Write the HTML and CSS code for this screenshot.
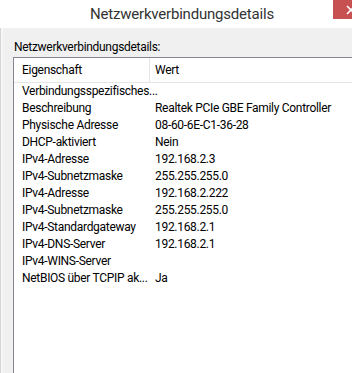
FILE: index.html
```html
<!DOCTYPE html>
<html lang="de">
<head>
  <meta charset="UTF-8" />
  <title>Netzwerkverbindungsdetails</title>
  <link rel="stylesheet" href="styles.css">
</head>
<body>

  <!-- Title bar -->
  <div class="titlebar">
    <span class="title">Netzwerkverbindungsdetails</span>
    <div class="close">
      <svg width="10" height="10" viewBox="0 0 10 10">
        <path d="M1 1 L9 9 M9 1 L1 9" stroke="#fff" stroke-width="1.6" />
      </svg>
    </div>
  </div>

  <!-- Dialog content -->
  <div class="dialog">
    <div class="label">Netzwerkverbindungsdetails:</div>

    <div class="listview">
      <div class="row header">
        <div class="cell">Eigenschaft</div>
        <div class="cell">Wert</div>
      </div>
      <div class="row"><div class="cell">Verbindungsspezifisches...</div><div class="cell"></div></div>
      <div class="row"><div class="cell">Beschreibung</div><div class="cell">Realtek PCIe GBE Family Controller</div></div>
      <div class="row"><div class="cell">Physische Adresse</div><div class="cell">08-60-6E-C1-36-28</div></div>
      <div class="row"><div class="cell">DHCP-aktiviert</div><div class="cell">Nein</div></div>
      <div class="row"><div class="cell">IPv4-Adresse</div><div class="cell">192.168.2.3</div></div>
      <div class="row"><div class="cell">IPv4-Subnetzmaske</div><div class="cell">255.255.255.0</div></div>
      <div class="row"><div class="cell">IPv4-Adresse</div><div class="cell">192.168.2.222</div></div>
      <div class="row"><div class="cell">IPv4-Subnetzmaske</div><div class="cell">255.255.255.0</div></div>
      <div class="row"><div class="cell">IPv4-Standardgateway</div><div class="cell">192.168.2.1</div></div>
      <div class="row"><div class="cell">IPv4-DNS-Server</div><div class="cell">192.168.2.1</div></div>
      <div class="row"><div class="cell">IPv4-WINS-Server</div><div class="cell"></div></div>
      <div class="row"><div class="cell">NetBIOS über TCPIP ak...</div><div class="cell">Ja</div></div>
    </div>
  </div>

</body>
</html>
```

FILE: styles.css
```css
* {
  box-sizing: border-box;
}

html, body {
  height: 100%;
}

body {
  margin: 0;
  font-family: Roboto, "Liberation Sans", sans-serif;
  font-size: 12px;
  letter-spacing: -0.3px;
  color: #000;
  background: #f0f0f0;
  display: flex;
  flex-direction: column;
  overflow: hidden;
}

/* Title bar */
.titlebar {
  position: relative;
  height: 28px;
  flex: none;
  background: #fff;
  display: flex;
  align-items: center;
  justify-content: center;
  padding-left: 12px;
}

.title {
  font-size: 15px;
  letter-spacing: -0.2px;
  color: #333;
}

/* close button is cut off by the right edge of the shot */
.close {
  position: absolute;
  top: 0;
  right: 0;
  width: 19px;
  height: 19px;
  background: #c75050;
  overflow: hidden;
  display: flex;
  align-items: center;
}

.close svg {
  flex: none;
  margin-left: 13px;
}

/* Dialog body */
.dialog {
  flex: 1;
  display: flex;
  flex-direction: column;
  padding: 12px 0 0 13px;
  border-left: 1px solid #d6d6d6;
  box-shadow: inset 2px 0 0 #f6f6f6;
}

.label {
  line-height: 15px;
  margin-bottom: 2px;
}

.listview {
  flex: 1;
  margin-left: -1px;
  background: #fff;
  border-left: 1px solid #828790;
  border-top: 1px solid #828790;
}

.row {
  display: grid;
  grid-template-columns: 136px 1fr;
  height: 17px;
  line-height: 17px;
  white-space: nowrap;
}

.row .cell:first-child {
  padding-left: 8px;
}

.row .cell + .cell {
  padding-left: 5px;
}

.row.header {
  height: 25px;
  line-height: 24px;
  border-bottom: 1px solid #e5e5e5;
}

.row.header .cell:first-child {
  border-right: 1px solid #e5e5e5;
}
```
